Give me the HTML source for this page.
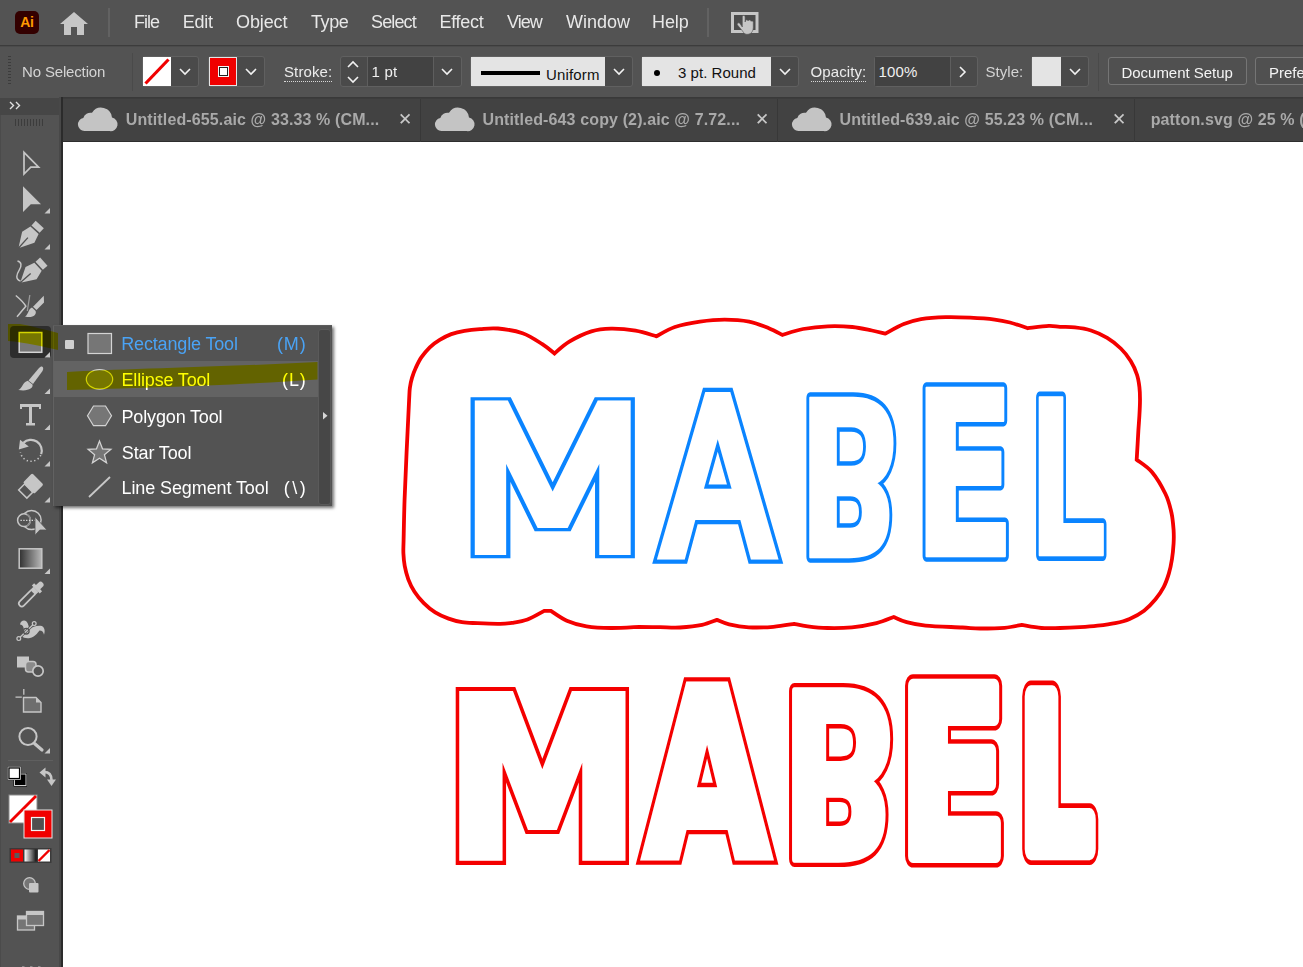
<!DOCTYPE html>
<html><head><meta charset="utf-8"><title>Adobe Illustrator</title>
<style>
html,body{margin:0;padding:0;}
body{width:1303px;height:967px;overflow:hidden;background:#fff;position:relative;font-family:"Liberation Sans",sans-serif;}
.abs{position:absolute;}
#menubar{left:0;top:0;width:1303px;height:45px;background:#535353;}
#menubar .mi{position:absolute;top:11px;font-size:18px;line-height:22px;color:#e8e8e8;white-space:nowrap;}
#ctrlbar{left:0;top:45px;width:1303px;height:52px;background:#535353;border-top:2px solid #535353;box-sizing:border-box;}
#ctrlbar .lb{position:absolute;font-size:15px;line-height:20px;color:#e0e0e0;white-space:nowrap;}
#tabbar{left:0;top:97px;width:1303px;height:45px;background:#424242;border-top:1px solid #393939;border-bottom:1px solid #2e2e2e;box-sizing:border-box;}
#tabbar .tb{position:absolute;top:12px;font-size:16px;line-height:20px;font-weight:bold;color:#a9a9a9;white-space:nowrap;}
#tabbar .x{position:absolute;top:12px;font-size:17px;line-height:20px;color:#c8c8c8;}
#tabbar .sep{position:absolute;top:1px;width:1px;height:43px;background:#383838;}
#tools{left:0;top:97px;width:63px;height:870px;background:#535353;border-right:2px solid #2b2b2b;box-sizing:border-box;}
.box{position:absolute;box-sizing:border-box;border:1px solid #606060;background:#4a4a4a;border-radius:3px;}
svg{position:absolute;overflow:visible;}
.fi,.fk{position:absolute;font-size:18px;line-height:22px;color:#fff;white-space:nowrap;}
.fi{left:69px;}

</style></head>
<body>
<!--ARTSTART--><svg id="art" style="left:0;top:0" width="1303" height="967" viewBox="0 0 1303 967">
<path d="M544.2 610.9 C541.4 612.3 532.9 617.5 527.5 619.5 C522.1 621.5 516.6 622.1 512.0 622.8 C507.4 623.5 505.7 623.7 500.0 623.8 C494.3 623.9 483.9 623.5 477.6 623.2 C471.3 622.9 466.8 623.0 462.0 622.2 C457.2 621.4 453.1 620.2 448.6 618.6 C444.1 617.0 439.3 615.0 435.2 612.4 C431.1 609.8 427.2 606.5 423.8 603.1 C420.4 599.7 417.1 595.7 414.5 591.7 C411.9 587.7 409.9 583.6 408.3 579.3 C406.7 575.0 405.5 570.2 404.7 565.9 C403.9 561.6 403.6 557.7 403.4 553.4 C403.2 549.1 403.4 549.1 403.6 540.0 C403.8 530.9 404.1 513.7 404.6 499.0 C405.1 484.3 405.9 468.5 406.6 452.0 C407.4 435.5 408.6 410.7 409.1 400.0 C409.7 389.3 409.4 391.5 409.9 387.8 C410.4 384.1 411.0 381.2 412.0 377.9 C413.0 374.6 414.1 371.4 415.7 368.0 C417.3 364.6 419.1 360.6 421.5 357.2 C423.9 353.8 426.8 350.2 429.8 347.3 C432.8 344.4 436.1 342.1 439.7 339.9 C443.3 337.7 447.2 335.6 451.3 334.1 C455.4 332.6 459.7 331.6 464.5 330.8 C469.3 330.0 474.4 329.5 480.0 329.1 C485.6 328.7 490.9 327.8 498.0 328.5 C505.1 329.2 515.2 330.6 522.6 333.2 C530.0 335.8 537.0 340.8 542.3 344.2 C547.6 347.6 552.5 351.9 554.5 353.5 C557.0 351.5 563.1 345.4 569.3 341.7 C575.4 338.0 584.4 333.6 591.4 331.4 C598.4 329.2 603.6 328.8 611.0 328.7 C618.4 328.6 628.0 329.4 635.6 330.7 C643.2 332.0 653.0 335.4 656.5 336.3 C659.6 334.8 667.6 329.4 674.9 327.0 C682.1 324.6 691.7 322.8 700.0 321.6 C708.3 320.4 716.4 319.6 724.6 319.6 C732.8 319.6 741.7 320.2 749.1 321.6 C756.5 323.0 763.3 326.0 768.8 328.2 C774.3 330.4 780.0 333.8 782.3 334.9 C785.8 333.9 795.5 330.4 803.1 329.0 C810.7 327.6 819.5 326.6 827.7 326.3 C835.9 326.0 844.9 326.3 852.3 327.0 C859.7 327.7 866.4 329.4 871.9 330.5 C877.4 331.6 883.1 333.1 885.4 333.6 C888.5 332.0 897.9 326.5 903.8 324.1 C909.7 321.7 914.0 320.4 921.0 319.2 C928.0 318.0 937.4 317.4 945.6 317.2 C953.8 316.9 961.9 317.3 970.1 317.7 C978.3 318.1 988.1 318.8 994.7 319.6 C1001.4 320.4 1004.5 321.1 1010.0 322.5 C1015.5 323.9 1024.9 327.2 1027.9 328.2 C1031.4 327.8 1043.5 326.0 1048.8 325.8 C1054.1 325.6 1055.7 326.5 1060.0 326.8 C1064.3 327.1 1069.7 326.8 1074.9 327.4 C1080.1 328.0 1085.6 328.8 1091.0 330.5 C1096.4 332.2 1102.2 334.9 1107.2 337.9 C1112.2 340.9 1116.9 344.7 1120.8 348.5 C1124.7 352.3 1128.0 356.6 1130.7 360.9 C1133.4 365.2 1135.5 370.2 1136.9 374.5 C1138.4 378.8 1138.9 382.8 1139.4 386.9 C1139.9 391.0 1140.0 394.6 1140.0 399.4 C1140.0 404.2 1139.7 410.4 1139.4 415.5 C1139.1 420.6 1138.9 422.6 1138.4 430.0 C1138.0 437.4 1137.0 454.8 1136.7 459.7 C1139.2 461.8 1147.1 466.3 1151.9 472.0 C1156.7 477.7 1162.2 487.2 1165.5 494.0 C1168.8 500.8 1170.2 507.0 1171.5 513.0 C1172.8 519.0 1173.2 524.9 1173.6 530.0 C1173.9 535.1 1173.9 538.6 1173.6 543.4 C1173.3 548.2 1172.8 554.0 1172.0 559.0 C1171.2 564.0 1170.3 568.8 1168.9 573.4 C1167.5 578.0 1166.0 582.6 1163.8 586.9 C1161.6 591.2 1158.8 595.3 1155.5 599.3 C1152.2 603.3 1148.4 607.4 1144.1 610.7 C1139.8 614.0 1134.4 616.8 1129.6 618.9 C1124.8 621.0 1120.5 622.0 1115.2 623.1 C1109.9 624.2 1103.5 625.0 1097.6 625.7 C1091.7 626.4 1086.3 626.8 1080.0 627.2 C1073.7 627.6 1066.4 627.9 1060.0 628.0 C1053.6 628.1 1047.8 628.5 1041.4 628.0 C1035.0 627.5 1025.0 625.4 1021.7 624.9 C1018.9 625.4 1011.6 627.2 1004.6 627.8 C997.6 628.4 987.0 628.5 980.0 628.5 C973.0 628.5 971.5 628.0 962.4 627.5 C953.3 627.0 935.0 626.5 925.6 625.6 C916.2 624.7 911.2 623.3 905.9 621.9 C900.6 620.5 895.7 617.8 893.7 617.0 C890.8 618.0 883.5 621.4 876.5 623.1 C869.5 624.8 860.1 626.5 851.9 627.3 C843.7 628.1 834.7 628.2 827.3 628.0 C819.9 627.8 813.2 627.0 807.7 626.3 C802.2 625.6 796.5 624.3 794.2 623.9 C790.7 624.4 780.9 626.2 773.3 626.8 C765.7 627.4 756.2 627.7 748.8 627.3 C741.4 626.9 734.4 625.6 729.1 624.4 C723.8 623.2 718.8 620.6 716.8 619.9 C714.3 620.7 708.2 623.6 702.1 624.9 C696.0 626.2 687.0 627.1 680.0 627.5 C673.0 627.9 666.8 627.3 660.0 627.2 C653.2 627.1 642.8 626.9 639.3 626.8 C634.6 627.0 619.8 628.1 611.0 628.0 C602.2 627.9 593.9 627.5 586.5 626.3 C579.1 625.1 572.7 623.3 566.8 620.7 C560.9 618.1 553.5 612.5 550.9 610.9 Z" fill="none" stroke="#f40000" stroke-width="3.8" stroke-linejoin="miter"/>
<text transform="translate(443.53 548.30) scale(2.5318 1.9287)" font-family="DejaVu Sans Light, DejaVu Sans, sans-serif" font-weight="200" font-size="100" vector-effect="non-scaling-stroke" stroke-linejoin="miter" stroke-miterlimit="2.2" fill="#0a84ff" stroke="#0a84ff" stroke-width="24.2">M</text><text transform="translate(443.53 548.30) scale(2.5318 1.9287)" font-family="DejaVu Sans Light, DejaVu Sans, sans-serif" font-weight="200" font-size="100" vector-effect="non-scaling-stroke" stroke-linejoin="miter" stroke-miterlimit="2.2" fill="#fff" stroke="#fff" stroke-width="16.6">M</text>
<text transform="translate(663.25 551.50) scale(1.5944 2.1056)" font-family="DejaVu Sans, sans-serif" font-weight="normal" font-size="100" vector-effect="non-scaling-stroke" stroke-linejoin="miter" stroke-miterlimit="2.2" fill="#0a84ff" stroke="#0a84ff" stroke-width="19.8">A</text><text transform="translate(663.25 551.50) scale(1.5944 2.1056)" font-family="DejaVu Sans, sans-serif" font-weight="normal" font-size="100" vector-effect="non-scaling-stroke" stroke-linejoin="miter" stroke-miterlimit="2.2" fill="#fff" stroke="#fff" stroke-width="12.2">A</text>
<text transform="translate(797.38 398.00) scale(1.3748 -2.1673)" font-family="DejaVu Sans, sans-serif" font-weight="bold" font-size="100" vector-effect="non-scaling-stroke" stroke-linejoin="round" fill="#0a84ff" stroke="#0a84ff" stroke-width="9.8">B</text><text transform="translate(797.38 398.00) scale(1.3748 -2.1673)" font-family="DejaVu Sans, sans-serif" font-weight="bold" font-size="100" vector-effect="non-scaling-stroke" stroke-linejoin="round" fill="#fff" stroke="#fff" stroke-width="2.2">B</text>
<text transform="translate(912.47 556.00) scale(1.5172 2.2977)" font-family="DejaVu Sans, sans-serif" font-weight="bold" font-size="100" vector-effect="non-scaling-stroke" stroke-linejoin="round" fill="#0a84ff" stroke="#0a84ff" stroke-width="9.8">E</text><text transform="translate(912.47 556.00) scale(1.5172 2.2977)" font-family="DejaVu Sans, sans-serif" font-weight="bold" font-size="100" vector-effect="non-scaling-stroke" stroke-linejoin="round" fill="#fff" stroke="#fff" stroke-width="2.2">E</text>
<text transform="translate(1028.25 555.00) scale(1.2257 2.1605)" font-family="DejaVu Sans, sans-serif" font-weight="bold" font-size="100" vector-effect="non-scaling-stroke" stroke-linejoin="round" fill="#0a84ff" stroke="#0a84ff" stroke-width="9.8">L</text><text transform="translate(1028.25 555.00) scale(1.2257 2.1605)" font-family="DejaVu Sans, sans-serif" font-weight="bold" font-size="100" vector-effect="non-scaling-stroke" stroke-linejoin="round" fill="#fff" stroke="#fff" stroke-width="2.2">L</text>
<text transform="translate(445.67 855.50) scale(1.9420 2.1948)" font-family="DejaVu Sans, sans-serif" font-weight="bold" font-size="100" vector-effect="non-scaling-stroke" stroke-linejoin="miter" stroke-miterlimit="2.2" fill="#f40000" stroke="#f40000" stroke-width="16.8">M</text><text transform="translate(445.67 855.50) scale(1.9420 2.1948)" font-family="DejaVu Sans, sans-serif" font-weight="bold" font-size="100" vector-effect="non-scaling-stroke" stroke-linejoin="miter" stroke-miterlimit="2.2" fill="#fff" stroke="#fff" stroke-width="9.2">M</text>
<text transform="translate(645.22 853.50) scale(1.5965 2.2839)" font-family="DejaVu Sans, sans-serif" font-weight="bold" font-size="100" vector-effect="non-scaling-stroke" stroke-linejoin="miter" stroke-miterlimit="2.2" fill="#f40000" stroke="#f40000" stroke-width="17.8">A</text><text transform="translate(645.22 853.50) scale(1.5965 2.2839)" font-family="DejaVu Sans, sans-serif" font-weight="bold" font-size="100" vector-effect="non-scaling-stroke" stroke-linejoin="miter" stroke-miterlimit="2.2" fill="#fff" stroke="#fff" stroke-width="10.2">A</text>
<text transform="translate(780.34 690.60) scale(1.5531 -2.3059)" font-family="DejaVu Sans, sans-serif" font-weight="bold" font-size="100" vector-effect="non-scaling-stroke" stroke-linejoin="round" fill="#f40000" stroke="#f40000" stroke-width="13.8">B</text><text transform="translate(780.34 690.60) scale(1.5531 -2.3059)" font-family="DejaVu Sans, sans-serif" font-weight="bold" font-size="100" vector-effect="non-scaling-stroke" stroke-linejoin="round" fill="#fff" stroke="#fff" stroke-width="6.2">B</text>
<text transform="translate(898.29 855.70) scale(1.6021 2.3416)" font-family="DejaVu Sans, sans-serif" font-weight="bold" font-size="100" vector-effect="non-scaling-stroke" stroke-linejoin="round" fill="#f40000" stroke="#f40000" stroke-width="19.8">E</text><text transform="translate(898.29 855.70) scale(1.6021 2.3416)" font-family="DejaVu Sans, sans-serif" font-weight="bold" font-size="100" vector-effect="non-scaling-stroke" stroke-linejoin="round" fill="#fff" stroke="#fff" stroke-width="12.2">E</text>
<text transform="translate(1020.60 849.00) scale(1.1331 2.0905)" font-family="DejaVu Sans, sans-serif" font-weight="bold" font-size="100" vector-effect="non-scaling-stroke" stroke-linejoin="round" fill="#f40000" stroke="#f40000" stroke-width="25.8">L</text><text transform="translate(1020.60 849.00) scale(1.1331 2.0905)" font-family="DejaVu Sans, sans-serif" font-weight="bold" font-size="100" vector-effect="non-scaling-stroke" stroke-linejoin="round" fill="#fff" stroke="#fff" stroke-width="18.2">L</text>
</svg><!--ARTEND-->
<div id="tabbar" class="abs">
  <div class="abs" style="left:0;top:0;width:1303px;height:1px;background:#3c3c3c;"></div>
  <svg style="left:78px;top:8px" width="38" height="25" viewBox="0 0 38 25"><path id="cloud" d="M6.500 25 a6.500 6.500 0 0 1 -1.200 -12.900 a7.500 7.500 0 0 1 8.700 -5.300 a10.800 10.800 0 0 1 20 4.800 a6.800 6.800 0 0 1 -2.500 13.400 Z" fill="#c4c4c4"/></svg>
  <div class="tb" id="t1" style="left:125.75px;letter-spacing:0.125px;">Untitled-655.aic @ 33.33 % (CM...</div>
  <div class="x" style="left:398px">✕</div>
  <div class="sep" style="left:420px"></div>
  <svg style="left:435px;top:8px" width="38" height="25" viewBox="0 0 38 25"><use href="#cloud"/></svg>
  <div class="tb" id="t2" style="left:482.50px;letter-spacing:0.130px;">Untitled-643 copy (2).aic @ 7.72...</div>
  <div class="x" style="left:755px">✕</div>
  <div class="sep" style="left:777px"></div>
  <svg style="left:792px;top:8px" width="38" height="25" viewBox="0 0 38 25"><use href="#cloud"/></svg>
  <div class="tb" id="t3" style="left:839.50px;letter-spacing:0.125px;">Untitled-639.aic @ 55.23 % (CM...</div>
  <div class="x" style="left:1112px">✕</div>
  <div class="sep" style="left:1134px"></div>
  <div class="tb" id="t4" style="left:1150.700px;letter-spacing:0.125px">patton.svg @ 25 % (CMYK/Preview)</div>
</div>
<div id="tools" class="abs">
  <div class="abs" style="left:0;top:1px;width:59px;height:17px;background:#464646;"></div>
    <div class="abs" style="left:59px;top:0;width:2px;height:870px;background:#484848;"></div>
  <div class="abs" style="left:0;top:18px;width:1px;height:852px;background:#4b4b4b;"></div>
  <svg style="left:9px;top:4px" width="12" height="9"><path d="M1 1 L4.5 4.5 L1 8 M7 1 L10.5 4.5 L7 8" fill="none" stroke="#e0e0e0" stroke-width="1.4"/></svg>
  <div class="abs" style="left:15px;top:22px;width:29px;height:7px;background:repeating-linear-gradient(to right,#3c3c3c 0,#3c3c3c 1px,transparent 1px,transparent 3px);"></div>
  <!-- icons drawn in page coords shifted by -97 via group -->
  <svg style="left:0;top:-97px" width="62" height="967" viewBox="0 0 62 967">
    <g fill="#c6c6c6" stroke="none">
      <!-- selection -->
      <path d="M24 152.300 L24 174 L30.800 167.200 L38.600 167.200 Z" fill="none" stroke="#c6c6c6" stroke-width="1.700" stroke-linejoin="miter"/>
      <!-- direct selection -->
      <path d="M23 186.300 L23 212 L30.800 204.300 L41 204.300 Z"/>
      <path d="M50 208 L50 213.5 L44.5 213.5 Z"/>
      <!-- pen -->
      <g transform="translate(30 235.300) rotate(42) scale(1.1 1.04)">
        <path d="M-5 -14 h10 v6 h-10 z"/>
        <path d="M-5 -6.5 h10 l2.5 9 L0.600 15.5 V3 h-1.200 V15.5 L-7.5 2.5 Z"/>
      </g>
      <path d="M50 244 L50 249.5 L44.5 249.5 Z"/>
      <!-- curvature -->
      <g transform="translate(33 271.300) rotate(48) scale(1.1 1.04)">
        <path d="M-5 -14 h10 v6 h-10 z"/>
        <path d="M-5 -6.5 h10 l2.5 9 L0.600 15.5 V3 h-1.200 V15.5 L-7.5 2.5 Z"/>
      </g>
      <path d="M17.5 261 C22 262 21.5 266 19.5 269.5 C16.5 274.5 15 279.5 20.5 281" fill="none" stroke="#c6c6c6" stroke-width="1.5"/>
      <!-- brush X -->
      <path d="M15.800 295.500 C20 299 24 303 25.800 306.200 C23 309.500 20 313.500 17 316.800" fill="none" stroke="#c6c6c6" stroke-width="1.5"/>
      <path d="M29.800 295 L27.300 311" fill="none" stroke="#9a9a9a" stroke-width="1.300"/>
      <path d="M43.800 295.800 L44 302.500 L36.500 310 L33 306.800 Z"/>
      <path d="M32 307.600 L35.600 311 C37 315 32.500 318.500 25 316.500 C28.500 315 28 309 32 307.600 Z"/>
      <!-- rectangle selected -->
      <rect x="10" y="326" width="41" height="32" rx="4" fill="#2d2d2d"/>
      <rect x="19.2" y="332.5" width="22.6" height="19.8" fill="#767676" stroke="#d4d4d4" stroke-width="1.5"/>
      <path d="M50 352 L50 357.5 L44.5 357.5 Z"/>
      <!-- paintbrush -->
      <path d="M42 366.5 C43.5 367 43.5 369 42.5 371 L33 384 L28.5 380.5 L39 368 C40 367 41 366.3 42 366.5 Z"/>
      <path d="M27.800 380.800 L32.500 384.600 C33.500 388.500 28 391.500 18.300 390 C22.500 388.500 22.500 382 27.800 380.800 Z"/>
      <path d="M50 388.5 L50 394 L44.5 394 Z"/>
      <!-- type -->
      <path d="M20 404 H41 V409 H39 V407 H32 V423 H35 V425.5 H26 V423 H29 V407 H22 V409 H20 Z"/>
      <path d="M50 424.5 L50 430 L44.5 430 Z"/>
      <!-- rotate -->
      <path d="M23.400 442.900 A10.800 10.800 0 0 1 41.150 454.200" fill="none" stroke="#c6c6c6" stroke-width="2.200"/>
      <path d="M20 439.800 L18.800 449.500 L28.800 446.500 Z"/>
      <path d="M40.800 455.100 A10.800 10.800 0 0 1 20.400 452.400" fill="none" stroke="#c6c6c6" stroke-width="1.600" stroke-dasharray="1.300 2.500"/>
      <path d="M50 461 L50 466.5 L44.5 466.5 Z"/>
      <!-- eraser -->
      <g transform="translate(30.75 486) rotate(-45)">
        <rect x="-3" y="-8" width="13" height="16" rx="1.5"/>
        <rect x="-11.3" y="-5.800" width="8.300" height="11.600" fill="none" stroke="#c6c6c6" stroke-width="1.5"/>
      </g>
      <path d="M50 497 L50 502.5 L44.5 502.5 Z"/>
      <!-- shape builder -->
      <circle cx="31.500" cy="520" r="9.600" fill="none" stroke="#c6c6c6" stroke-width="1.5"/>
      <circle cx="24" cy="520.200" r="6.400" fill="#535353" stroke="#c6c6c6" stroke-width="1.5"/>
      <path d="M26.800 514.500 A6.400 6.400 0 0 1 26.800 526" fill="none" stroke="#8c8c8c" stroke-width="1.5"/>
      <path d="M20.500 520.300 H35" fill="none" stroke="#dcdcdc" stroke-width="1.300" stroke-dasharray="1.300 1.500"/>
      <path d="M35 516.800 L35 535.200 L39.800 530 L47 530 Z" stroke="#535353" stroke-width="0.800"/>
      <!-- gradient -->
      <defs><linearGradient id="gr1" x1="0" x2="1" y1="0" y2="0"><stop offset="0" stop-color="#303030"/><stop offset="1" stop-color="#b8b8b8"/></linearGradient>
      <linearGradient id="gr2" x1="0" x2="1" y1="0" y2="0"><stop offset="0" stop-color="#ffffff"/><stop offset="1" stop-color="#111111"/></linearGradient></defs>
      <rect x="19.2" y="548.8" width="22.6" height="19.4" fill="url(#gr1)" stroke="#c6c6c6" stroke-width="1.5"/>
      <path d="M50 568.5 L50 574 L44.5 574 Z"/>
      <!-- eyedropper -->
      <g transform="translate(30.300 595) rotate(45)">
        <path d="M-3 -14.500 a3 3 0 0 1 6 0 v3.500 h2.600 v3.200 h-11.200 v-3.200 h2.600 z"/>
        <path d="M-3.600 -8 h7.200 v4.500 h-7.200 z"/>
        <path d="M-2.900 -4 V12 a2.900 2.900 0 0 0 5.800 0 V-4" fill="none" stroke="#c6c6c6" stroke-width="1.700"/>
      </g>
      <!-- puppet warp -->
      <path d="M20 624.500 C20.500 621 24 619.500 26.500 621.500 C28.500 623.500 28.500 627 29.500 629 C32 627 36 625.500 40.500 625.800 C44.500 626.200 45.500 631 44 634.800 C43.500 632 42 630.500 39.500 630.500 C37.500 633 35 637 30 638 C27 638.500 23 638 21.500 636 C23.500 634 24.500 631 23.500 627.500 C23 625.500 21.500 624.500 20 624.500 Z"/>
      <path d="M19 638.300 L34 623.800" fill="none" stroke="#535353" stroke-width="2.600"/>
      <path d="M19 638.300 L34 623.800" fill="none" stroke="#c6c6c6" stroke-width="1.200"/>
      <circle cx="18.800" cy="638.600" r="1.900" fill="#535353" stroke="#c6c6c6" stroke-width="1.200"/>
      <circle cx="34.200" cy="623.600" r="1.900" fill="#535353" stroke="#c6c6c6" stroke-width="1.200"/>
      <circle cx="26.300" cy="631.200" r="2.800" fill="none" stroke="#535353" stroke-width="1.300"/>
      <!-- blend -->
      <rect x="17" y="656.5" width="12" height="11"/>
      <rect x="25.5" y="661.5" width="10.5" height="10.5" rx="3" fill="#8a8a8a" stroke="#c6c6c6" stroke-width="1.5"/>
      <circle cx="38" cy="671" r="5.2" fill="#535353" stroke="#c6c6c6" stroke-width="1.7"/>
      <!-- artboard -->
      <path d="M23.800 689 V694.800 M15.500 697.200 H21.800" fill="none" stroke="#c6c6c6" stroke-width="1.3"/>
      <path d="M23.5 697.5 H36 L41 702.5 V712 H23.5 Z" fill="#6e6e6e" stroke="#c6c6c6" stroke-width="1.4"/>
      <path d="M36 697.5 L41 702.5 H36 Z"/>
      <!-- zoom -->
      <circle cx="28" cy="736.5" r="8.6" fill="none" stroke="#c6c6c6" stroke-width="2"/>
      <path d="M34.5 743.5 L42 750" fill="none" stroke="#c6c6c6" stroke-width="3.2" stroke-linecap="round"/>
      <path d="M50 748 L50 753.5 L44.5 753.5 Z"/>
      <!-- divider -->
      <rect x="8" y="760" width="45" height="1" fill="#5f5f5f"/>
      <!-- default fill stroke -->
      <rect x="14.5" y="774" width="11.5" height="11.5" fill="#000" stroke="#d0d0d0" stroke-width="1"/>
      <rect x="15" y="774.5" width="10.5" height="10.5" fill="none" stroke="#000" stroke-width="3"/>
      <rect x="14.5" y="774" width="11.500" height="11.5" fill="none" stroke="#d0d0d0" stroke-width="1"/>
      <rect x="8.500" y="767.5" width="11.500" height="11.500" fill="#fff" stroke="#000" stroke-width="2.2"/>
      <rect x="8" y="767" width="12.500" height="12.500" fill="none" stroke="#d0d0d0" stroke-width="0.8"/>
      <!-- swap -->
      <path d="M44 772 C49 772 51.5 775 51.5 780" fill="none" stroke="#c6c6c6" stroke-width="2.6"/>
      <path d="M39.500 772.5 L45.5 767.5 L45.5 777.5 Z"/>
      <path d="M47 779.5 L56 779.5 L51.5 786 Z"/>
      <!-- fill swatch -->
      <rect x="9" y="795" width="28" height="28" fill="#fff" stroke="#8c8c8c" stroke-width="1"/>
      <path d="M10 822 L36 796" stroke="#f00000" stroke-width="2.8" fill="none"/>
      <!-- stroke swatch -->
      <rect x="24" y="810" width="28" height="28" fill="#f00000" stroke="#e6e6e6" stroke-width="1"/>
      <rect x="31.500" y="817.500" width="13" height="13" fill="#505050" stroke="#f4f4f4" stroke-width="1.2"/>
      <!-- mode -->
      <rect x="9.500" y="848" width="42" height="15" fill="#3a3a3a"/>
      <rect x="11" y="849.5" width="12" height="12" fill="#f00000"/>
      <rect x="14.500" y="853" width="5" height="5" fill="#5a5a5a"/>
      <rect x="24.500" y="849.5" width="12" height="12" fill="url(#gr2)"/>
      <rect x="38" y="849.5" width="12" height="12" fill="#fff"/>
      <path d="M38.500 861 L49.500 850" stroke="#f00000" stroke-width="2.4" fill="none"/>
      <!-- draw mode -->
      <circle cx="29.500" cy="883.5" r="5.800" fill="#757575" stroke="#c6c6c6" stroke-width="1.3"/>
      <rect x="29" y="883" width="9.500" height="9.500" rx="1"/>
      <!-- screen mode -->
      <rect x="17.500" y="916" width="17" height="14" fill="#757575" stroke="#c6c6c6" stroke-width="1.3"/>
      <rect x="17.500" y="916" width="17" height="3.500"/>
      <rect x="26.500" y="911.500" width="17" height="14" fill="#757575" stroke="#c6c6c6" stroke-width="1.3"/>
      <rect x="26.500" y="911.500" width="17" height="3.500"/>
      <!-- dots -->
      <rect x="22" y="966" width="2.500" height="1" fill="#8a8a8a"/><rect x="30" y="966" width="2.500" height="1" fill="#8a8a8a"/><rect x="38" y="966" width="2.500" height="1" fill="#8a8a8a"/>
    </g>
  </svg>
</div>

<div id="flyout" class="abs" style="left:53px;top:325px;width:279px;height:181px;background:#535353;box-shadow:2px 2px 3px rgba(0,0,0,0.55);">
  <div class="abs" style="left:0;top:36px;width:265px;height:36px;background:#636363;"></div>
  <div class="abs" style="left:264.500px;top:3.500px;width:13.500px;height:176px;background:#474747;border-radius:3px;border:1px solid #5a5a5a;box-sizing:border-box;"></div>
  <div class="abs" style="left:0;top:0;width:1px;height:181px;background:#626262;"></div>
  <div class="abs" style="left:0;top:0;width:279px;height:1px;background:#5c5c5c;"></div>
  <svg style="left:270px;top:86.500px" width="4.500" height="7.500"><path d="M0 0 L4.500 3.750 L0 7.500 Z" fill="#d6d6d6"/></svg>
  <div class="abs" style="left:12.300px;top:15px;width:9px;height:9px;background:#cfcfcf;border-radius:1px;"></div>
  <svg style="left:0;top:1px" width="279" height="179">
    <rect x="35" y="7.500" width="23.500" height="20" fill="#767676" stroke="#d4d4d4" stroke-width="1.2"/>
    <ellipse cx="46.500" cy="53.300" rx="13.200" ry="9.800" fill="#767676" stroke="#d4d4d4" stroke-width="1.2"/>
    <path d="M34.500 89.800 L40.500 80 H52.500 L58.500 89.800 L52.500 99.700 H40.500 Z" fill="#767676" stroke="#d4d4d4" stroke-width="1.2"/>
    <path d="M46.500 115 L49.500 122.800 L58 123.300 L51.400 128.700 L53.600 136.800 L46.500 132.200 L39.400 136.800 L41.600 128.700 L35 123.300 L43.500 122.800 Z" fill="#767676" stroke="#d4d4d4" stroke-width="1.2"/>
    <path d="M36 171 L57 151" stroke="#c8c8c8" stroke-width="1.800" fill="none"/>
  </svg>
  <div class="fi" id="f1" style="left:68.20px;letter-spacing:-0.152px;top:8px;color:#4aa3f5">Rectangle Tool</div><div class="fk" id="k1" style="left:223.90px;letter-spacing:0.956px;top:8px;color:#4aa3f5">(M)</div>
  <div class="fi" id="f2" style="left:68.50px;letter-spacing:-0.168px;top:44px">Ellipse Tool</div><div class="fk" id="k2" style="left:229.00px;letter-spacing:0.898px;top:44px">(L)</div>
  <div class="fi" id="f3" style="left:68.50px;letter-spacing:-0.152px;top:81px">Polygon Tool</div>
  <div class="fi" id="f4" style="left:68.80px;letter-spacing:-0.129px;top:117px">Star Tool</div>
  <div class="fi" id="f5" style="left:68.50px;letter-spacing:-0.100px;top:152px">Line Segment Tool</div><div class="fk" id="k5" style="left:230.80px;letter-spacing:2.502px;top:152px">(\)</div>
</div>
<!-- highlighter marks (multiply) -->
<svg class="hl" style="left:0;top:0;mix-blend-mode:multiply" width="340" height="520">
  <path d="M67 372 C120 369 220 367 317.500 362 L317.500 379.500 C240 385 140 388 67 390 Z" fill="#ffff00"/>
  <path d="M8 324 L20 324 C32 326 46 330 58 333 L58 350 C44 347 24 342 8 341 Z" fill="#ffff00"/>
</svg>
<div id="ctrlbar" class="abs">
  <div class="abs" style="left:0;top:-2px;width:1303px;height:1px;background:#3c3c3c;"></div>
  <div class="abs" style="left:0;top:-1px;width:1303px;height:1px;background:#4b4b4b;"></div>
  <!-- gripper -->
  <div class="abs" style="left:8px;top:9px;width:3px;height:30px;background:repeating-linear-gradient(to bottom,#3c3c3c 0,#3c3c3c 1px,transparent 1px,transparent 3px);"></div>
  <div class="lb" id="c1" style="left:22.00px;letter-spacing:-0.155px;top:15px;color:#d4d4d4">No Selection</div>
  <div class="abs" style="left:132px;top:6px;width:1px;height:38px;background:#4a4a4a;"></div>
  <!-- fill swatch -->
  <div class="box" style="left:142px;top:9px;width:57px;height:31px;"></div>
  <div class="abs" style="left:143px;top:10px;width:28px;height:29px;background:#fff;"></div>
  <svg style="left:143px;top:10px" width="28" height="29"><line x1="2.5" y1="26.5" x2="25.5" y2="2.5" stroke="#f00000" stroke-width="3.2"/></svg>
  <svg style="left:179px;top:20.500px" width="12" height="8"><path d="M1 1 L6 6 L11 1" fill="none" stroke="#f2f2f2" stroke-width="1.6"/></svg>
  <!-- stroke swatch -->
  <div class="box" style="left:208px;top:9px;width:57px;height:31px;"></div>
  <div class="abs" style="left:209px;top:10px;width:28px;height:29px;background:#f00000;border:1.500px solid #e4e4e4;box-sizing:border-box;"></div>
  <div class="abs" style="left:218.700px;top:19.700px;width:9.600px;height:9.600px;background:#fff;border:1.300px solid #222;outline:1px solid #f4f4f4;box-sizing:border-box;"></div>
  <svg style="left:245px;top:20.500px" width="12" height="8"><path d="M1 1 L6 6 L11 1" fill="none" stroke="#f2f2f2" stroke-width="1.6"/></svg>
  <!-- stroke -->
  <div class="lb" id="c2" style="left:284.00px;letter-spacing:0.108px;top:15px;color:#ececec;border-bottom:1px dotted #d8d8d8;line-height:19px;">Stroke:</div>
  <div class="box" style="left:340px;top:9px;width:122px;height:31px;"></div>
  <div class="abs" style="left:367px;top:10px;width:67px;height:29px;background:#424242;border-left:1px solid #5e5e5e;border-right:1px solid #5e5e5e;box-sizing:border-box;"></div>
  <svg style="left:347px;top:13px" width="12" height="24"><path d="M1 7 L6 2 L11 7 M1 17 L6 22 L11 17" fill="none" stroke="#f2f2f2" stroke-width="1.6"/></svg>
  <div class="lb" id="c3" style="left:371.50px;letter-spacing:0.216px;top:15px;color:#f0f0f0">1 pt</div>
  <svg style="left:441px;top:20.500px" width="12" height="8"><path d="M1 1 L6 6 L11 1" fill="none" stroke="#f2f2f2" stroke-width="1.6"/></svg>
  <!-- uniform -->
  <div class="box" style="left:470px;top:9px;width:163px;height:31px;"></div>
  <div class="abs" style="left:471px;top:10px;width:134px;height:29px;background:#e4e4e4;"></div>
  <div class="abs" style="left:481px;top:23.500px;width:59px;height:4.500px;background:#000;"></div>
  <div class="lb" id="c4" style="left:546.00px;letter-spacing:0.165px;top:18px;color:#111">Uniform</div>
  <svg style="left:613px;top:20.500px" width="12" height="8"><path d="M1 1 L6 6 L11 1" fill="none" stroke="#f2f2f2" stroke-width="1.6"/></svg>
  <!-- brush -->
  <div class="box" style="left:641px;top:9px;width:158px;height:31px;"></div>
  <div class="abs" style="left:642px;top:10px;width:129px;height:29px;background:#e4e4e4;"></div>
  <div class="abs" style="left:653.500px;top:22.500px;width:6px;height:6px;border-radius:3px;background:#000;"></div>
  <div class="lb" id="c5" style="left:678.00px;letter-spacing:0.029px;top:16px;color:#111">3 pt. Round</div>
  <svg style="left:779px;top:20.500px" width="12" height="8"><path d="M1 1 L6 6 L11 1" fill="none" stroke="#f2f2f2" stroke-width="1.6"/></svg>
  <!-- opacity -->
  <div class="lb" id="c6" style="left:810.50px;letter-spacing:0.093px;top:15px;color:#ececec;border-bottom:1px dotted #d8d8d8;line-height:19px;">Opacity:</div>
  <div class="box" style="left:874px;top:9px;width:104px;height:31px;"></div>
  <div class="abs" style="left:875px;top:10px;width:76px;height:29px;background:#424242;border-right:1px solid #5e5e5e;box-sizing:border-box;"></div>
  <div class="lb" id="c7" style="left:878.50px;letter-spacing:0.158px;top:15px;color:#f0f0f0">100%</div>
  <svg style="left:959px;top:19px" width="8" height="12"><path d="M1 1 L6 6 L1 11" fill="none" stroke="#f2f2f2" stroke-width="1.6"/></svg>
  <!-- style -->
  <div class="lb" id="c8" style="left:985.50px;letter-spacing:0.031px;top:15px;color:#d4d4d4">Style:</div>
  <div class="box" style="left:1031px;top:9px;width:58px;height:31px;"></div>
  <div class="abs" style="left:1032px;top:10px;width:29px;height:29px;background:#e4e4e4;"></div>
  <svg style="left:1069px;top:20.500px" width="12" height="8"><path d="M1 1 L6 6 L11 1" fill="none" stroke="#f2f2f2" stroke-width="1.6"/></svg>
  <div class="abs" style="left:1098px;top:6px;width:1px;height:38px;background:#4a4a4a;"></div>
  <!-- buttons -->
  <div class="box" style="left:1108px;top:10px;width:139px;height:28px;background:#505050;border-color:#757575;"></div>
  <div class="lb" id="c9" style="left:1121.50px;letter-spacing:-0.030px;top:16px;color:#f4f4f4">Document Setup</div>
  <div class="box" style="left:1255px;top:10px;width:120px;height:28px;background:#505050;border-color:#757575;"></div>
  <div class="lb" id="c10" style="left:1269px;top:16px;color:#f4f4f4">Preferences</div>
</div>
<div id="menubar" class="abs">
  <div class="abs" style="left:15px;top:11px;width:24px;height:23px;background:#330000;border-radius:5px;"></div>
  <div class="abs" style="left:15px;top:11px;width:24px;height:23px;color:#ff9a00;font-weight:bold;font-size:14px;line-height:23px;text-align:center;letter-spacing:-0.2px;">Ai</div>
  <svg style="left:60px;top:12px" width="28" height="23" viewBox="0 0 28 23"><path d="M14 0 L0 12 L4 12 L4 23 L11 23 L11 15 L17 15 L17 23 L24 23 L24 12 L28 12 Z" fill="#c6c6c6"/></svg>
  <div class="abs" style="left:108px;top:8px;width:2px;height:29px;background:#626262;"></div>
  <div class="mi" id="m1" style="left:134.00px;letter-spacing:-0.998px;">File</div>
  <div class="mi" id="m2" style="left:182.75px;letter-spacing:-0.255px;">Edit</div>
  <div class="mi" id="m3" style="left:236.00px;letter-spacing:-0.104px;">Object</div>
  <div class="mi" id="m4" style="left:311.00px;letter-spacing:-0.421px;">Type</div>
  <div class="mi" id="m5" style="left:371.00px;letter-spacing:-0.855px;">Select</div>
  <div class="mi" id="m6" style="left:439.50px;letter-spacing:-0.289px;">Effect</div>
  <div class="mi" id="m7" style="left:507.00px;letter-spacing:-0.980px;">View</div>
  <div class="mi" id="m8" style="left:566.00px;letter-spacing:-0.004px;">Window</div>
  <div class="mi" id="m9" style="left:652.00px;letter-spacing:-0.086px;">Help</div>
  <div class="abs" style="left:707px;top:8px;width:2px;height:29px;background:#626262;"></div>
  <svg style="left:731px;top:12px" width="28" height="23" viewBox="0 0 28 23"><rect x="1.500" y="1.500" width="24.500" height="18" fill="#4b4b4b" stroke="#c6c6c6" stroke-width="3"/><path d="M11.300 15 V4.800 a1.400 1.400 0 0 1 2.800 0 V10 l0.600 -1.600 a1.300 1.300 0 0 1 2.300 0.400 l0.700 -0.500 a1.300 1.300 0 0 1 2.200 0.900 l0.600 -0.200 a1.300 1.300 0 0 1 1.800 1.300 V15.500 c0 3.500 -1.800 6.500 -5.300 6.800 c-2.800 0.200 -4 -0.800 -5.500 -3.300 L6.300 12.800 a1.500 1.500 0 0 1 2.500 -1.500 Z" fill="#c6c6c6" stroke="#535353" stroke-width="0.600"/></svg>
</div>
</body></html>
